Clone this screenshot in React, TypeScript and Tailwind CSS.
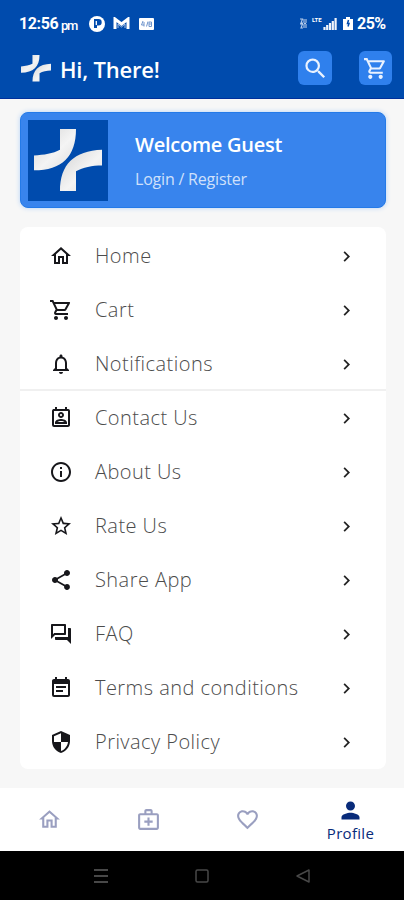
import { useState } from "react";
import type { IconType } from "react-icons";
import {
  MdChevronRight,
  MdEventNote,
  MdNotificationsNone,
  MdOutlineForum,
  MdOutlineHome,
  MdOutlineInfo,
  MdOutlineMedicalServices,
  MdOutlinePermContactCalendar,
  MdOutlineSecurity,
  MdOutlineShoppingCart,
  MdPerson,
  MdSearch,
  MdShare,
  MdStarBorder,
  MdFavoriteBorder,
} from "react-icons/md";

type MenuItem = {
  label: string;
  icon: IconType;
};

const shopItems: MenuItem[] = [
  { label: "Home", icon: MdOutlineHome },
  { label: "Cart", icon: MdOutlineShoppingCart },
  { label: "Notifications", icon: MdNotificationsNone },
];

const infoItems: MenuItem[] = [
  { label: "Contact Us", icon: MdOutlinePermContactCalendar },
  { label: "About Us", icon: MdOutlineInfo },
  { label: "Rate Us", icon: MdStarBorder },
  { label: "Share App", icon: MdShare },
  { label: "FAQ", icon: MdOutlineForum },
  { label: "Terms and conditions", icon: MdEventNote },
  { label: "Privacy Policy", icon: MdOutlineSecurity },
];

const tabs: MenuItem[] = [
  { label: "Home", icon: MdOutlineHome },
  { label: "Health", icon: MdOutlineMedicalServices },
  { label: "Wishlist", icon: MdFavoriteBorder },
  { label: "Profile", icon: MdPerson },
];

const Logo = ({ className }: { className: string }) => (
  <svg viewBox="0 0 68 64" preserveAspectRatio="none" className={className}>
    <defs>
      <linearGradient id="blade" x1="0" y1="0" x2="1" y2="1">
        <stop offset="0" stopColor="#d2d2d2" />
        <stop offset="0.55" stopColor="#f4f4f4" />
        <stop offset="1" stopColor="#dcdcdc" />
      </linearGradient>
    </defs>
    <path d="M26 0H42C42 28 28 42 0 42V27C10 26 19 25 26 21Z" fill="url(#blade)" />
    <path d="M42 63H26C26 36 40 22 68 21V37C58 37 49 39 42 43Z" fill="url(#blade)" />
  </svg>
);

const StatusBar = () => (
  <div className="flex h-[46px] items-center justify-between pl-[19px] pr-[18px] pt-px text-white font-[Roboto,sans-serif]">
    <div className="flex items-center">
      <span className="w-[39px] text-base font-bold leading-none tracking-[-0.4px]">12:56</span>
      <span className="ml-[3px] mt-[3px] text-[13px] font-medium leading-none tracking-[-1.2px]">pm</span>
      <svg viewBox="0 0 16 16" className="ml-[12px] h-4 w-4">
        <circle cx="8" cy="8" r="8" fill="#fff" />
        <path d="M5 3H9.500A3.200 3.200 0 0 1 9.500 9.400H8V12H5Z" fill="#004bad" />
        <path d="M7.300 5V9" stroke="#fff" strokeWidth="1.300" />
      </svg>
      <svg viewBox="0 0 17 13" className="ml-2 h-[13px] w-[17px]">
        <path d="M2 12V2L8.500 7L15 2V12" stroke="#fff" strokeWidth="3" fill="none" />
        <path d="M5 11V7L8.500 10L12 7V11" stroke="#a9c1e3" strokeWidth="1" fill="none" />
      </svg>
      <svg viewBox="0 0 15 12" className="ml-[9px] h-3 w-[15px]">
        <rect width="15" height="12" rx="1" fill="#fff" />
        <path d="M4 3L2.500 7H5M5 4V8.500M7.500 8.500L9 3.500M10 4H12.500V8.500H10ZM10 6H12.500" stroke="#6e94cc" fill="none" />
      </svg>
    </div>
    <div className="flex items-center">
      <svg viewBox="0 0 7 11" className="h-[11px] w-[7px]">
        <path d="M0 1H2.500L1 5H3M4 1V5M6 1V5M0 6H2.500L1 10H3M4 6V10M6 6V10M4 5.500H6" stroke="#b9cde9" strokeWidth="1.100" fill="none" />
      </svg>
      <span className="ml-[5px] -mt-[7px] w-[11px] text-[6px] font-bold leading-none">LTE</span>
      <svg viewBox="0 0 14 12" className="h-3 w-3.5">
        <path d="M1.500 12V9M4.200 12V7M7 12V5M9.800 12V3M12.600 12V0" stroke="#f0f4fb" strokeWidth="2.200" />
      </svg>
      <svg viewBox="0 0 10 13" className="ml-[6px] h-[13px] w-[10px]">
        <path d="M0 2H3V0H7V2H10V13H0Z" fill="#fff" />
        <path d="M5.500 3L4.500 6.500H6L5 9.500" stroke="#004bad" strokeWidth="1.500" fill="none" />
      </svg>
      <span className="ml-1 w-[29px] text-base font-bold leading-none tracking-[-0.5px]">25%</span>
    </div>
  </div>
);

const MenuRow = ({ label, icon: Icon }: MenuItem) => (
  <button type="button" className="flex h-[54px] w-full items-center pl-[29px] pr-[29px] text-left">
    <Icon className="h-6 w-6 shrink-0 text-[#17171b]" />
    <span className="ml-[22px] flex-1 pb-px text-xl font-light leading-none tracking-[0.45px] whitespace-nowrap text-[#4c4c4c]">
      {label}
    </span>
    <MdChevronRight className="h-[21px] w-[21px] text-[#222]" />
  </button>
);

export default function App() {
  const [activeTab, setActiveTab] = useState("Profile");

  return (
    <div className="flex h-[900px] w-[404px] flex-col overflow-hidden bg-[#f7f7f7] font-['Open_Sans',sans-serif]">
      {/* header */}
      <header className="h-[99px] shrink-0 border-b border-[#00309c] bg-[#004bad]">
        <StatusBar />
        <div className="flex h-11 items-center pl-[21px] pr-[12px]">
          <Logo className="h-[27px] w-[30px]" />
          <h1 className="ml-[9px] flex-1 pt-px text-[22px] font-semibold leading-none tracking-[-0.2px] text-white">
            Hi, There!
          </h1>
          <button type="button" className="flex h-[34px] w-[34px] items-center justify-center rounded-md bg-[#2f80ed]">
            <MdSearch className="h-[27px] w-[27px] text-[#eaf2ff]" />
          </button>
          <button type="button" className="ml-[27px] flex h-[34px] w-[33px] items-center justify-center rounded-md bg-[#2f80ed]">
            <MdOutlineShoppingCart className="h-[25px] w-[25px] text-[#eaf2ff]" />
          </button>
        </div>
      </header>

      <main className="flex-1 pl-5 pr-[18px] pt-[13px]">
        {/* guest card */}
        <section className="flex h-24 items-center rounded-lg border border-[#247ae8] bg-[#3884ed] pl-[7px] shadow-[0_0_5px_#b5d2f7]">
          <div className="flex h-[81px] w-[80px] items-center justify-center bg-[#004bad]">
            <Logo className="h-[63px] w-[68px]" />
          </div>
          <div className="ml-[27px] pt-0.5">
            <h2 className="text-xl font-semibold leading-7 tracking-[-0.25px] text-white">Welcome Guest</h2>
            <p className="mt-2 text-base leading-6 tracking-[-0.2px] text-[#cfe0fb]">Login / Register</p>
          </div>
        </section>

        {/* menu */}
        <section className="mt-[19px] h-[542px] rounded-lg bg-white pt-0.5">
          <div className="border-b-2 border-[#f0f0f0] h-[162px]">
            {shopItems.map((item) => (
              <MenuRow key={item.label} {...item} />
            ))}
          </div>
          {infoItems.map((item) => (
            <MenuRow key={item.label} {...item} />
          ))}
        </section>
      </main>

      {/* bottom tabs */}
      <nav className="grid h-[63px] shrink-0 grid-cols-[99px_99px_99px_107px] bg-white">
        {tabs.map(({ label, icon: Icon }) => {
          const active = label === activeTab;
          return (
            <button
              key={label}
              type="button"
              aria-label={label}
              onClick={() => setActiveTab(label)}
              className={`flex flex-col items-center justify-center ${active ? "text-[#082b7a]" : "text-[#9a9fc0]"}`}
            >
              <Icon className={active ? "h-[27px] w-[27px]" : "h-[25px] w-[25px]"} />
              {active && <span className="text-[15px] leading-[19px] tracking-[0.3px]">{label}</span>}
            </button>
          );
        })}
      </nav>

      {/* system buttons */}
      <div className="grid h-[49px] shrink-0 grid-cols-3 items-center justify-items-center bg-black px-[51px]">
        <svg viewBox="0 0 14 14" className="h-3.5 w-3.5" stroke="#484848" strokeWidth="2">
          <path d="M0 1H14M0 7H14M0 13H14" />
        </svg>
        <svg viewBox="0 0 14 14" className="h-3.5 w-3.5" stroke="#484848" strokeWidth="1.500" fill="none">
          <rect x="1" y="1" width="12" height="12" rx="1.500" />
        </svg>
        <svg viewBox="0 0 14 14" className="h-3.5 w-3.5" stroke="#484848" strokeWidth="1.500" strokeLinejoin="round" fill="none">
          <path d="M13 1V13L1 7Z" />
        </svg>
      </div>
    </div>
  );
}
